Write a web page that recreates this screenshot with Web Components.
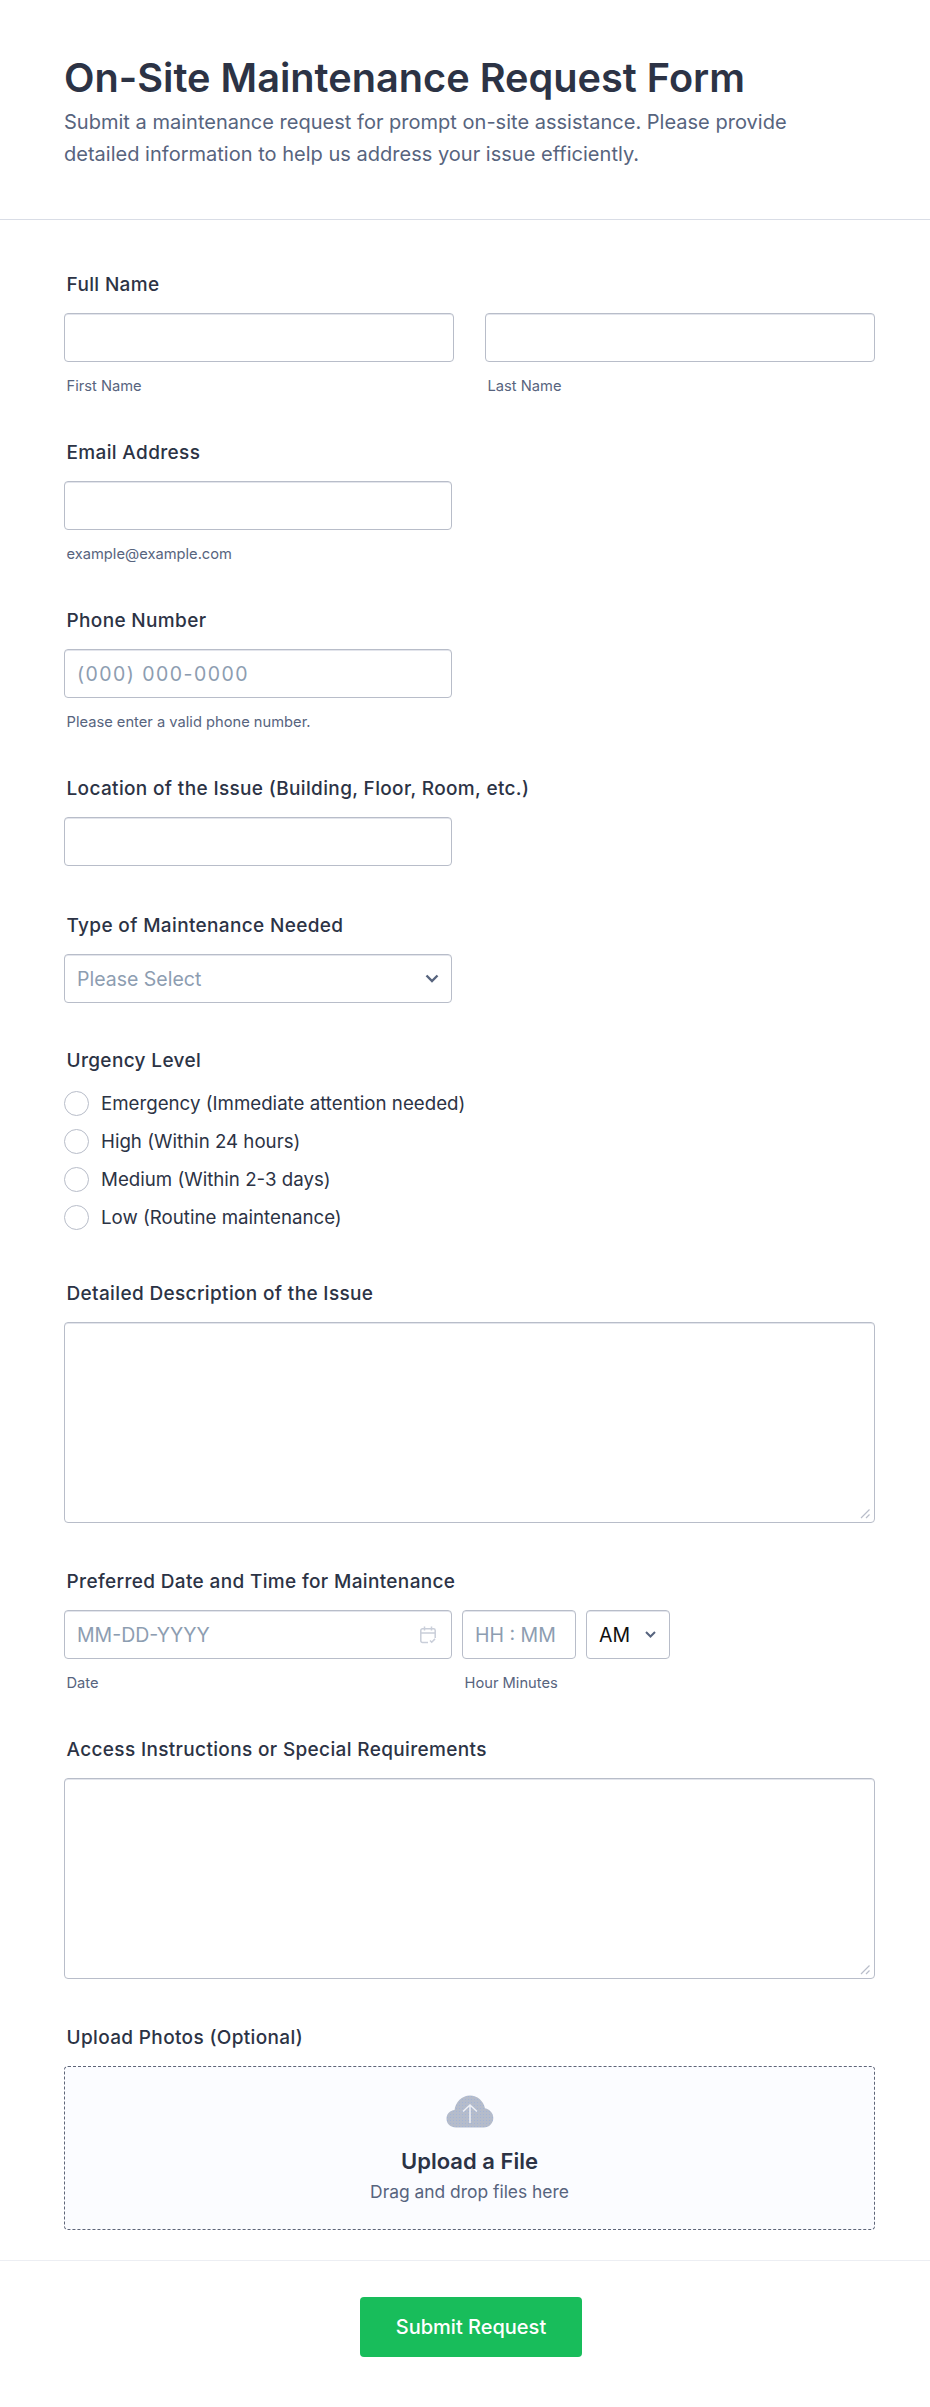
<!DOCTYPE html>
<html lang="en">
<head>
<meta charset="UTF-8">
<title>On-Site Maintenance Request Form</title>
<style>
  html, body { margin: 0; background: #fff; }
  body { font-family: Inter, "Liberation Sans", sans-serif; color: #2c3345; }
</style>
</head>
<body>
<template id="form-header-tpl">
  <style>
    :host { display: block; padding: 53px 64px 49px; border-bottom: 1px solid #d9dde6; height: 117px; }
    h1 { margin: 0; font-size: 39.700px; line-height: 50px; font-weight: 600; color: #2c3345; }
    p { margin: 3px 0 0; width: 760px; font-size: 20.050px; line-height: 32px; color: #57647e; }
  </style>
  <h1><slot name="title"></slot></h1>
  <p><slot name="sub"></slot></p>
</template>

<template id="form-field-tpl">
  <style>
    :host { display: block; margin-top: 45px; }
    .lbl { margin: 0 0 16px 2.500px; padding-top: 1px; font-size: 19px; letter-spacing: .35px; line-height: 24px; font-weight: 480; color: #2c3345; }
    :host([tight]) .lbl { margin-bottom: 11px; }
  </style>
  <div class="lbl"></div>
  <slot></slot>
</template>

<template id="input-box-tpl">
  <style>
    :host { display: block; width: 388px; min-width: 0; }
    :host([wide]) { width: auto; flex: 1; }
    .box { box-sizing: border-box; height: 49px; padding: 0 12px; border: 1px solid #b8bdc9; border-radius: 4px; background: #fff; box-shadow: 0 1px 0 #e3e5ec inset; display: flex; align-items: center; justify-content: space-between; font-size: 19.500px; color: #8d9db1; }
    .ph:empty { display: none; }
    .sub { margin: 15px 0 0 2.500px; font-size: 14.700px; line-height: 18px; color: #57647e; }
    .sub:empty { display: none; }
    ::slotted(svg) { flex: none; }
  </style>
  <div class="box"><span class="ph"></span><slot></slot></div>
  <div class="sub"></div>
</template>

<template id="radio-option-tpl">
  <style>
    :host { display: flex; align-items: center; gap: 12px; height: 38px; font-size: 18.700px; color: #2c3345; }
    i { box-sizing: border-box; width: 25px; height: 25px; border: 1px solid #b8bdc9; border-radius: 50%; background: #fff; }
  </style>
  <i></i><span><slot></slot></span>
</template>

<template id="text-box-tpl">
  <style>
    :host { display: block; position: relative; box-sizing: border-box; height: 201px; border: 1px solid #b8bdc9; border-radius: 4px; background: #fff; box-shadow: 0 1px 0 #e3e5ec inset; }
    svg { position: absolute; right: 3px; bottom: 3px; }
  </style>
  <svg width="12" height="12" viewBox="0 0 12 12" fill="none" stroke="#b8bdc9" stroke-width="1.200"><path d="M2 11 10.500 2.500M7 11l3.500-3.500"/></svg>
</template>

<template id="upload-box-tpl">
  <style>
    :host { display: flex; flex-direction: column; align-items: center; box-sizing: border-box; height: 164px; padding-top: 28px; border: 1px dashed #5e6578; border-radius: 4px; background: #fbfcff; }
    b { margin-top: 18px; font-size: 22px; line-height: 30px; font-weight: 600; color: #2c3345; }
    span { margin-top: 4px; font-size: 17.400px; line-height: 24px; color: #57647e; }
  </style>
  <svg width="48" height="33" viewBox="0 0 48 33">
    <defs><pattern id="dots" width="3" height="3" patternUnits="userSpaceOnUse"><rect width="3" height="3" fill="#b5bccb"/><rect x="1" y="1" width="1" height="1" fill="#a3b4d6"/></pattern></defs>
    <path fill="url(#dots)" d="M10 32.500C4.500 32.500.5 28.700.5 23.800c0-4.600 3.400-8.200 8-8.700C9.400 7 15.900.5 24 .5c7.300 0 13.400 5.300 15 12.700 4.700.9 8.300 5 8.300 9.800 0 5.300-4.200 9.500-9.500 9.500z"/>
    <path fill="none" stroke="#eef0f6" stroke-width="1.500" d="M24 28V10M17 16.500 24 10l7 6.500"/>
  </svg>
  <b><slot name="title"></slot></b>
  <span><slot name="sub"></slot></span>
</template>

<template id="submit-bar-tpl">
  <style>
    :host { display: flex; justify-content: center; margin-top: 30px; padding: 36px 0 0 12px; height: 110px; border-top: 1px solid #eceef3; }
    button { width: 222px; height: 60px; border: 0; border-radius: 4px; background: #18bd5b; color: #fff; font: 500 20px Inter, "Liberation Sans", sans-serif; }
  </style>
  <button><slot></slot></button>
</template>

<template id="maintenance-form-tpl">
  <style>
    :host { display: block; width: 930px; }
    main { padding: 7px 55px 0 64px; }
  </style>
  <slot name="head"></slot>
  <main><slot></slot></main>
  <slot name="foot"></slot>
</template>

<script>
  function tpl(id) { return document.getElementById(id).content.cloneNode(true); }

  class FormHeader extends HTMLElement {
    connectedCallback() { this.attachShadow({mode: 'open'}).append(tpl('form-header-tpl')); }
  }
  class FormField extends HTMLElement {
    connectedCallback() {
      this.attachShadow({mode: 'open'}).append(tpl('form-field-tpl'));
      this.shadowRoot.querySelector('.lbl').textContent = this.getAttribute('label');
    }
  }
  class InputBox extends HTMLElement {
    connectedCallback() {
      this.attachShadow({mode: 'open'}).append(tpl('input-box-tpl'));
      const ph = this.shadowRoot.querySelector('.ph');
      ph.textContent = this.getAttribute('placeholder') || '';
      if (this.hasAttribute('spaced')) ph.style.letterSpacing = this.getAttribute('spaced');
      this.shadowRoot.querySelector('.sub').textContent = this.getAttribute('sub') || '';
    }
  }
  class RadioOption extends HTMLElement {
    connectedCallback() { this.attachShadow({mode: 'open'}).append(tpl('radio-option-tpl')); }
  }
  class TextBox extends HTMLElement {
    connectedCallback() { this.attachShadow({mode: 'open'}).append(tpl('text-box-tpl')); }
  }
  class UploadBox extends HTMLElement {
    connectedCallback() { this.attachShadow({mode: 'open'}).append(tpl('upload-box-tpl')); }
  }
  class SubmitBar extends HTMLElement {
    connectedCallback() { this.attachShadow({mode: 'open'}).append(tpl('submit-bar-tpl')); }
  }
  class FieldRow extends HTMLElement {
    connectedCallback() {
      const gap = this.getAttribute('gap') || '31';
      this.attachShadow({mode: 'open'}).innerHTML =
        `<style>:host { display: flex; gap: ${gap}px; }</style><slot></slot>`;
    }
  }
  class MaintenanceForm extends HTMLElement {
    connectedCallback() { this.attachShadow({mode: 'open'}).append(tpl('maintenance-form-tpl')); }
  }

  customElements.define('form-header', FormHeader);
  customElements.define('form-field', FormField);
  customElements.define('input-box', InputBox);
  customElements.define('radio-option', RadioOption);
  customElements.define('text-box', TextBox);
  customElements.define('upload-box', UploadBox);
  customElements.define('submit-bar', SubmitBar);
  customElements.define('field-row', FieldRow);
  customElements.define('maintenance-form', MaintenanceForm);
</script>

<maintenance-form>
  <form-header slot="head">
    <span slot="title">On-Site Maintenance Request Form</span>
    <span slot="sub">Submit a maintenance request for prompt on-site assistance. Please provide detailed information to help us address your issue efficiently.</span>
  </form-header>

  <form-field label="Full Name">
    <field-row>
      <input-box wide sub="First Name"></input-box>
      <input-box wide sub="Last Name"></input-box>
    </field-row>
  </form-field>
  <form-field label="Email Address"><input-box sub="example@example.com"></input-box></form-field>
  <form-field label="Phone Number"><input-box placeholder="(000) 000-0000" spaced="1.450px" sub="Please enter a valid phone number."></input-box></form-field>
  <form-field label="Location of the Issue (Building, Floor, Room, etc.)"><input-box></input-box></form-field>
  <form-field label="Type of Maintenance Needed" style="margin-top:47px">
    <input-box placeholder="Please Select">
      <svg width="14" height="9" viewBox="0 0 14 9" fill="none" stroke="#57647e" stroke-width="2.400"><path d="M1.500 1.500 7 7l5.500-5.500"/></svg>
    </input-box>
  </form-field>
  <form-field label="Urgency Level" tight>
    <radio-option>Emergency (Immediate attention needed)</radio-option>
    <radio-option>High (Within 24 hours)</radio-option>
    <radio-option>Medium (Within 2-3 days)</radio-option>
    <radio-option>Low (Routine maintenance)</radio-option>
  </form-field>
  <form-field label="Detailed Description of the Issue"><text-box></text-box></form-field>
  <form-field label="Preferred Date and Time for Maintenance" style="margin-top:46px">
    <field-row gap="10">
      <input-box placeholder="MM-DD-YYYY" sub="Date">
        <svg width="16" height="18" viewBox="0 0 16 18" fill="none" stroke="#c9ced9" stroke-width="1.500" style="margin-right:3px"><path d="M8 16.500H2.500a1.700 1.700 0 0 1-1.700-1.700V4.500a1.700 1.700 0 0 1 1.700-1.700h11a1.700 1.700 0 0 1 1.700 1.700v7.500M1 7h14M4.500.5v4M11.500.5v4M10 14.500l1.700 1.700 3.300-3.300"/></svg>
      </input-box>
      <input-box placeholder="HH : MM" sub="Hour Minutes" style="width:114px"></input-box>
      <input-box style="width:84px">
        <span style="color:#0f0f0f">AM</span>
        <svg width="11" height="7" viewBox="0 0 11 7" fill="none" stroke="#57647e" stroke-width="2" style="margin-right:1px"><path d="M1 1l4.500 4.500L10 1"/></svg>
      </input-box>
    </field-row>
  </form-field>
  <form-field label="Access Instructions or Special Requirements"><text-box></text-box></form-field>
  <form-field label="Upload Photos (Optional)" style="margin-top:46px">
    <upload-box>
      <span slot="title">Upload a File</span>
      <span slot="sub">Drag and drop files here</span>
    </upload-box>
  </form-field>

  <submit-bar slot="foot">Submit Request</submit-bar>
</maintenance-form>
</body>
</html>
